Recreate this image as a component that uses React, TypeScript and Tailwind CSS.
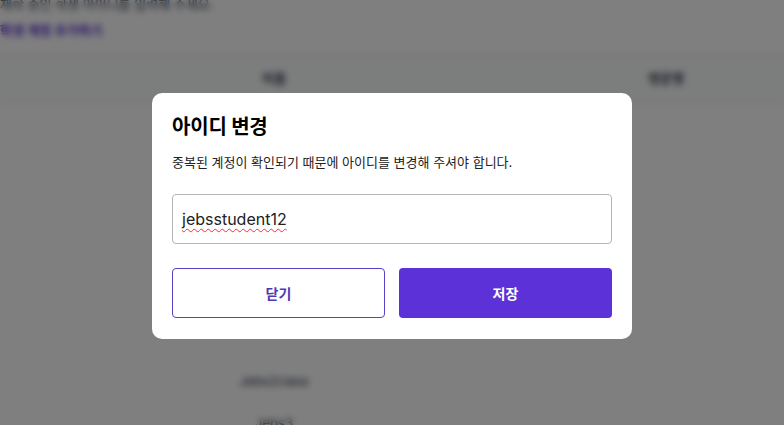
import React, { useState } from 'react';

const font = "font-['Inter','Noto_Sans_CJK_KR',sans-serif]";

const emptyRows = [0, 1, 2, 3, 4, 5];

const BackgroundPage: React.FC = () => (
  <div className="min-h-[425px] bg-white text-gray-800">
    <div className="-mt-[6px]">
      <p className="text-[13px] leading-[20px] text-gray-700">재학 중인 학생 아이디를 입력해 주세요.</p>
      <p className="text-[13px] leading-[20px] font-semibold text-[#5b33d6] mt-[6px]">학생 계정 추가하기</p>
    </div>
    <table className="w-full mt-[14px] border-t border-gray-200 text-[13px]">
      <thead>
        <tr className="bg-gray-50 border-b border-gray-200 h-[48px]">
          <th className="w-[548px] font-semibold text-gray-700">이름</th>
          <th className="font-semibold text-gray-700">영문명</th>
        </tr>
      </thead>
      <tbody>
        {emptyRows.map((i) => (
          <tr key={i} className="border-b border-gray-100 h-[43px]">
            <td />
            <td />
          </tr>
        ))}
        <tr className="border-b border-gray-100 h-[43px]">
          <td className="text-center text-gray-700">Jebs2class</td>
          <td />
        </tr>
        <tr className="h-[40px]">
          <td className="text-center text-gray-700">Jebs3</td>
          <td />
        </tr>
      </tbody>
    </table>
  </div>
);

const ChangeIdModal: React.FC = () => {
  const [value] = useState('jebsstudent12');

  return (
    <div className="fixed inset-0 bg-black/50 backdrop-blur-[3px] flex items-start justify-center pt-[93px]">
      <div className="w-[480px] bg-white rounded-[10px] px-5 pt-5 pb-[21px]">
        <h2 className="text-[20px] leading-[28px] font-bold text-black tracking-[-0.01em]">아이디 변경</h2>
        <p className="mt-[12px] text-[13px] leading-[18px] text-[#222]">
          중복된 계정이 확인되기 때문에 아이디를 변경해 주셔야 합니다.
        </p>
        <div className="mt-[23px] h-[50px] border border-[#b5b5b5] rounded-[4px] flex items-center px-[9px]">
          <span className="text-[16px] text-[#222] underline decoration-wavy decoration-red-500 decoration-1 underline-offset-[3px]">
            {value}
          </span>
        </div>
        <div className="mt-[24px] grid grid-cols-2 gap-[14px]">
          <button className="h-[50px] rounded-[4px] border border-[#5a3fc9] bg-white text-[14px] font-bold text-[#4f36b8]">
            닫기
          </button>
          <button className="h-[50px] rounded-[4px] bg-[#5c32d8] text-[14px] font-bold text-white">
            저장
          </button>
        </div>
      </div>
    </div>
  );
};

const App: React.FC = () => (
  <div className={`${font} relative w-[784px] h-[425px] overflow-hidden`}>
    <BackgroundPage />
    <ChangeIdModal />
  </div>
);

export default App;
